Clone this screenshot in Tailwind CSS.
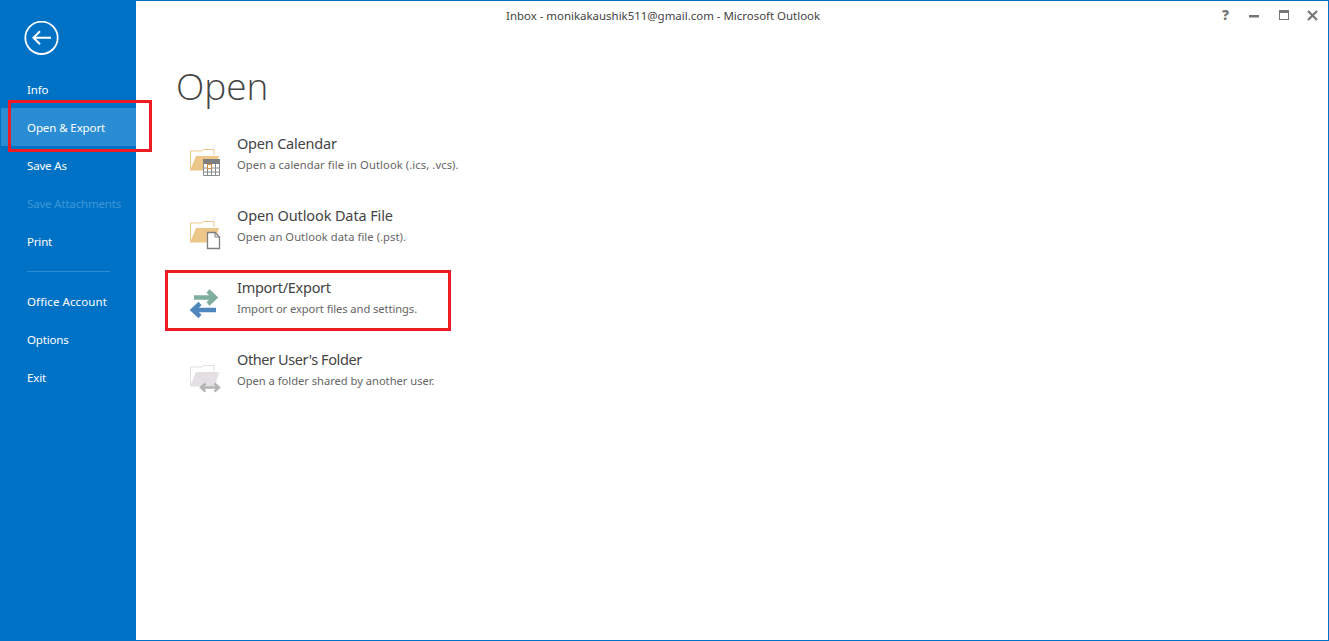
<!DOCTYPE html>
<html>
<head>
<meta charset="utf-8">
<script src="https://cdn.jsdelivr.net/npm/@tailwindcss/browser@4"></script>
</head>
<body class="bg-white overflow-hidden">
<div class="relative w-[1329px] h-[641px] flex bg-white border-t border-r border-b border-[#0072c6] font-['Noto_Sans',sans-serif] overflow-hidden box-border">
  <nav class="w-[136px] shrink-0 bg-[#0072c6] text-white text-[11.5px] tracking-[-0.17px] flex flex-col">
    <div class="h-[69px] pt-[20px] pl-[24px] shrink-0">
      <svg width="35" height="35" viewBox="0 0 35 35" fill="none" stroke="white"><circle cx="17.5" cy="16.800" r="16.200" stroke-width="1.800"/><path d="M9.500 16.800H27M16 10.300L9.500 16.800L16 23.300" stroke-width="2"/></svg>
    </div>
    <div class="h-[38px] flex items-center pl-[27px] pt-[2px]">Info</div>
    <div class="h-[38px] flex items-center pl-[26px] ml-px bg-[#2a8dd4] pt-[2px] tracking-[-0.1px]">Open &amp; Export</div>
    <div class="h-[38px] flex items-center pl-[27px] pt-[2px]">Save As</div>
    <div class="h-[38px] flex items-center pl-[27px] pt-[2px] text-[#3f96d6]">Save Attachments</div>
    <div class="h-[38px] flex items-center pl-[27px] pt-[2px]">Print</div>
    <div class="h-[22px] flex items-center pl-[27px]"><div class="w-[83px] h-px bg-[#2a8dd4]"></div></div>
    <div class="h-[38px] flex items-center pl-[27px] pt-[2px] tracking-[0.1px]">Office Account</div>
    <div class="h-[38px] flex items-center pl-[27px] pt-[2px]">Options</div>
    <div class="h-[38px] flex items-center pl-[27px] pt-[2px]">Exit</div>
  </nav>
  <main class="flex-1 flex flex-col relative">
    <div class="absolute top-[7px] left-[370px] text-[11.44px] leading-[16px] text-[#444] whitespace-nowrap">Inbox - monikakaushik511@gmail.com - Microsoft Outlook</div>
    <div class="absolute top-0 right-0 h-[28px] w-[120px] text-[#777]">
      <span class="absolute right-[99px] top-[6px] text-[14px] leading-[16px] font-[900] font-['Noto_Sans',sans-serif]">?</span>
      <svg class="absolute right-[69px] top-[7px]" width="10" height="10" viewBox="0 0 10 10"><rect x="0" y="7" width="10" height="2.500" fill="#777"/></svg>
      <svg class="absolute right-[38px] top-[9px]" width="11" height="11" viewBox="0 0 11 11" fill="none"><rect x=".5" y=".5" width="9" height="9" stroke="#777"/><rect x="0" y="0" width="10" height="3" fill="#777"/></svg>
      <svg class="absolute right-[10px] top-[9px]" width="11" height="11" viewBox="0 0 11 11" fill="none" stroke="#777" stroke-width="2.200"><path d="M1 1L10 10M10 1L1 10"/></svg>
    </div>
    <h1 class="pl-[40px] pt-[60px] text-[37px] leading-[50px] font-light text-[#444] font-['Open_Sans',sans-serif]">Open</h1>
    <div class="flex flex-col mt-[16px] ml-[29px] w-[300px]">
      <div class="h-[72px] flex">
        <div class="w-[72px] shrink-0 pl-[24px] pt-[22px]">
          <svg width="32" height="32" viewBox="0 0 32 32" class="overflow-visible"><path d="M1.500 21V2H13L15 .5H25V6" fill="none" stroke="#edc78a"/><path d="M1 21.500L7 7H30L26 21.500Z" fill="#edc78a"/><rect x="14" y="10" width="17" height="17" fill="#fff"/><rect x="14" y="10" width="17" height="5" fill="#7f7f7f"/><path d="M14.500 15V26.500H30.500V15M14 19H31M14 23H31M18.500 15V27M22.500 15V27M26.500 15V27" fill="none" stroke="#8a8a8a"/><rect x="18.500" y="15.500" width="4" height="4" fill="#fff" stroke="#e8883a"/></svg>
        </div>
        <div class="flex flex-col">
          <div class="mt-[6px] text-[14.5px] tracking-[-0.2px] leading-[20px] text-[#444] whitespace-nowrap">Open Calendar</div>
          <div class="mt-[4px] text-[11.2px] tracking-[0.09px] leading-[16px] text-[#666] whitespace-nowrap">Open a calendar file in Outlook (.ics, .vcs).</div>
        </div>
      </div>
      <div class="h-[72px] flex">
        <div class="w-[72px] shrink-0 pl-[24px] pt-[22px]">
          <svg width="32" height="32" viewBox="0 0 32 32" class="overflow-visible"><path d="M1.500 21V2H13L15 .5H25V6" fill="none" stroke="#edc78a"/><path d="M1 21.500L7 7H30L26 21.500Z" fill="#edc78a"/><path d="M18.500 11.500H26L30.500 16V27.500H18.500Z" fill="#fff" stroke="#7f7f7f" stroke-width="1.300"/><path d="M26 11.500V16H30.500" fill="none" stroke="#7f7f7f"/></svg>
        </div>
        <div class="flex flex-col">
          <div class="mt-[6px] text-[14.5px] tracking-[-0.12px] leading-[20px] text-[#444] whitespace-nowrap">Open Outlook Data File</div>
          <div class="mt-[4px] text-[11.2px] tracking-[0.06px] leading-[16px] text-[#666] whitespace-nowrap">Open an Outlook data file (.pst).</div>
        </div>
      </div>
      <div class="h-[72px] flex">
        <div class="w-[72px] shrink-0 pl-[24px] pt-[22px]">
          <svg width="32" height="32" viewBox="0 0 32 32" fill="none" class="overflow-visible" stroke-width="4.500"><path d="M5 4.500H25M19 -2L26 4.500L19 11" stroke="#7fae9e"/><path d="M27 17H5M11 10.500L4 17L11 23.500" stroke="#4f86bd"/></svg>
        </div>
        <div class="flex flex-col">
          <div class="mt-[6px] text-[14.5px] tracking-[-0.28px] leading-[20px] text-[#444] whitespace-nowrap">Import/Export</div>
          <div class="mt-[4px] text-[11.2px] tracking-[-0.08px] leading-[16px] text-[#666] whitespace-nowrap">Import or export files and settings.</div>
        </div>
      </div>
      <div class="h-[72px] flex">
        <div class="w-[72px] shrink-0 pl-[24px] pt-[22px]">
          <svg width="32" height="32" viewBox="0 0 32 32" class="overflow-visible"><path d="M1.500 21V2H13L15 .5H25V6" fill="none" stroke="#e3dfe3"/><path d="M1 21.500L7 7H30L26 21.500Z" fill="#e3dfe3"/><path d="M13 22.500H29M16.500 18.500L12 22.500L16.500 26.500M25.500 18.500L30 22.500L25.500 26.500" fill="none" stroke="#b4b4b4" stroke-width="2.400"/></svg>
        </div>
        <div class="flex flex-col">
          <div class="mt-[6px] text-[14.5px] tracking-[-0.4px] leading-[20px] text-[#444] whitespace-nowrap">Other User's Folder</div>
          <div class="mt-[4px] text-[11.2px] tracking-[-0.03px] leading-[16px] text-[#666] whitespace-nowrap">Open a folder shared by another user.</div>
        </div>
      </div>
    </div>
  </main>
  <div class="absolute left-[8px] top-[99px] w-[144px] h-[52px] border-[3px] border-[#ed1c24]"></div>
  <div class="absolute left-[165px] top-[269px] w-[286px] h-[61px] border-[3px] border-[#ed1c24]"></div>
</div>
</body>
</html>
